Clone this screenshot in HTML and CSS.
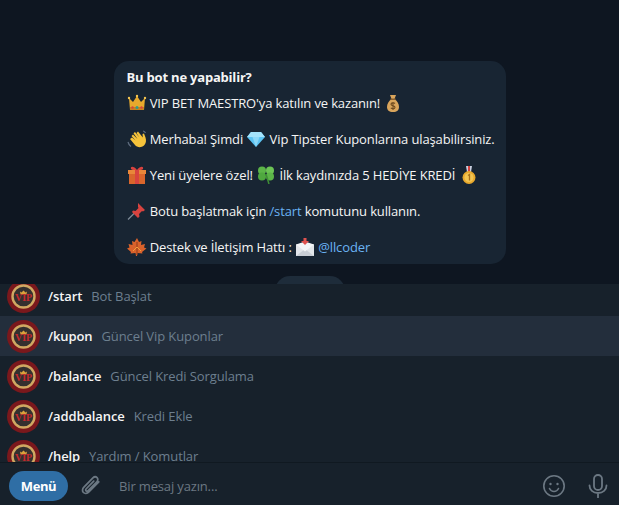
FILE: index.html
```html
<!DOCTYPE html>
<html lang="tr">
<head>
  <meta charset="UTF-8">
  <title>Bot</title>
  <link rel="stylesheet" href="styles.css">
</head>
<body>
  <svg class="defs" aria-hidden="true">
    <symbol id="crown" viewBox="0 0 20 18">
      <path d="M2 4l4 4 4-6 4 6 4-4-1 12H3z" fill="#e8a92c"/>
      <path d="M3 13h14v3H3z" fill="#c9811e"/>
      <circle cx="10" cy="13.500" r="1.500" fill="#2f9c8c"/>
      <circle cx="5.500" cy="13.500" r="1.200" fill="#d8433f"/>
      <circle cx="14.500" cy="13.500" r="1.200" fill="#d8433f"/>
      <circle cx="2" cy="4" r="1.200" fill="#f3c552"/>
      <circle cx="10" cy="2" r="1.200" fill="#f3c552"/>
      <circle cx="18" cy="4" r="1.200" fill="#f3c552"/>
    </symbol>
    <symbol id="bag" viewBox="0 0 20 18">
      <path d="M7 1h6l-1.500 4c3 2 4.500 5 4.500 8 0 3-2 5-6 5s-6-2-6-5c0-3 1.500-6 4.500-8z" fill="#d9a55c"/>
      <path d="M7.500 4.500h5v1.500h-5z" fill="#8a5f2c"/>
      <path d="M12 9.500c-1-1-4-1-4 .8s4 1 4 3-3.200 1.600-4.200.6M10 8v8" fill="none" stroke="#6e4a1f" stroke-width="1.100"/>
    </symbol>
    <symbol id="wave" viewBox="0 0 20 18">
      <path d="M3 9l5 6c2 2.500 6 3 9 .5 2-2 2.500-5 1.500-8L17 3.500l-1.500.5.300 3.500L11 1.500 9.500 3l3 4.500L8 2 6.500 3.300 10.500 9 6 4.500 4.500 6l4 4.500L5 7.500z" fill="#f5c33b"/>
      <path d="M1 12c.5 2 1.500 3.500 3 4.500M16 1c1 .2 2 1 2.500 2" fill="none" stroke="#5f6d80" stroke-width="1.200"/>
    </symbol>
    <symbol id="gem" viewBox="0 0 20 18">
      <path d="M5 2h10l4 5-9 10L1 7z" fill="#5cc3f2"/>
      <path d="M1 7h18L15 2H5z" fill="#a4e3fb"/>
      <path d="M6.500 7L10 17l3.500-10z" fill="#8bd8f8"/>
    </symbol>
    <symbol id="gift" viewBox="0 0 20 18">
      <path d="M2 6h16v12H2z" fill="#d9662c"/>
      <path d="M1 4h18v4H1z" fill="#e8873a"/>
      <path d="M8 4h4v14H8z" fill="#d8433f"/>
      <path d="M10 4C7 0 3 0 4 3c.3 1 3 1 6 1zm0 0c3-4 7-4 6-1-.3 1-3 1-6 1z" fill="#d8433f"/>
    </symbol>
    <symbol id="clover" viewBox="0 0 20 18">
      <circle cx="6" cy="4.500" r="4" fill="#5cb548"/>
      <circle cx="14" cy="4.500" r="4" fill="#6cc455"/>
      <circle cx="6" cy="10.500" r="4" fill="#4fa83f"/>
      <circle cx="14" cy="10.500" r="4" fill="#5cb548"/>
      <path d="M10 8l3 10" stroke="#3f8f35" stroke-width="1.500"/>
    </symbol>
    <symbol id="medal" viewBox="0 0 20 18">
      <path d="M7 0h6l-1 6H8z" fill="#c9cfe0"/>
      <path d="M9 0h2v6H9z" fill="#d8433f"/>
      <circle cx="10" cy="11.500" r="6.500" fill="#e8a92c"/>
      <circle cx="10" cy="11.500" r="4.500" fill="#f3c552"/>
      <path d="M9 9.500l1.500-1v6" fill="none" stroke="#a8701a" stroke-width="1.300"/>
    </symbol>
    <symbol id="pin" viewBox="0 0 20 18">
      <path d="M1 17.500l7-7" stroke="#7f8b98" stroke-width="1.300"/>
      <path d="M11 1l7 7-2 1.500-1-.5-3 3 .5 2.500-1.500 1.500-6-6L6 8.500l2.500.5 3-3-.5-1z" fill="#d8433f"/>
    </symbol>
    <symbol id="leaf" viewBox="0 0 20 18">
      <path d="M10 0l2 4 2.500-1-.5 4 4-1-1 3.500 2.500 1-4.500 3.500.5 1.500-5-.5-.5 3h-1l-.5-3-5 .5.500-1.500L0 10.500l2.500-1L1.500 6l4 1-.5-4L7.500 4z" fill="#d9622b"/>
      <path d="M10 4v13" stroke="#8f3a1a" stroke-width="1"/>
      <path d="M10 9l4 4M10 9l-4 4" stroke="#f0a03c" stroke-width="1"/>
    </symbol>
    <symbol id="mail" viewBox="0 0 20 18">
      <path d="M1 6.500L10 5l9 1.500V18H1z" fill="#e3e6ea"/>
      <path d="M1 18l9-7 9 7z" fill="#c9ced5"/>
      <path d="M1 6.500l9 7 9-7-9-3z" fill="#f4f5f7"/>
      <path d="M8.500 0h3v3H14l-4 4-4-4h2.500z" fill="#e0524f"/>
    </symbol>
    <symbol id="vip" viewBox="0 0 33 33">
      <circle cx="16.500" cy="16.500" r="16.500" fill="#7a181c"/>
      <circle cx="16.500" cy="16.500" r="11" fill="#34302f" stroke="#d0a862" stroke-width="2.400"/>
      <path d="M13 11.500l1.500 1 2-2 2 2 1.500-1-.5 3h-6z" fill="#d9a13c"/>
      <text x="16.500" y="21" class="vip-text">VIP</text>
    </symbol>
  </svg>

  <main class="chat">
    <section class="card">
      <p class="card-title">Bu bot ne yapabilir?</p>
      <p><svg class="emo"><use href="#crown"/></svg> VIP BET MAESTRO'ya katılın ve kazanın! <svg class="emo"><use href="#bag"/></svg></p>
      <p><svg class="emo"><use href="#wave"/></svg> Merhaba! Şimdi <svg class="emo"><use href="#gem"/></svg> Vip Tipster Kuponlarına ulaşabilirsiniz.</p>
      <p><svg class="emo"><use href="#gift"/></svg> Yeni üyelere özel! <svg class="emo"><use href="#clover"/></svg> İlk kaydınızda 5 HEDİYE KREDİ <svg class="emo"><use href="#medal"/></svg></p>
      <p><svg class="emo"><use href="#pin"/></svg> Botu başlatmak için <a>/start</a> komutunu kullanın.</p>
      <p><svg class="emo"><use href="#leaf"/></svg> Destek ve İletişim Hattı : <svg class="emo"><use href="#mail"/></svg> <a>@llcoder</a></p>
    </section>
    <div class="start-pill"></div>
  </main>

  <ul class="commands">
    <li class="cmd"><svg class="avatar"><use href="#vip"/></svg><b>/start</b><span>Bot Başlat</span></li>
    <li class="cmd active"><svg class="avatar"><use href="#vip"/></svg><b>/kupon</b><span>Güncel Vip Kuponlar</span></li>
    <li class="cmd"><svg class="avatar"><use href="#vip"/></svg><b>/balance</b><span>Güncel Kredi Sorgulama</span></li>
    <li class="cmd"><svg class="avatar"><use href="#vip"/></svg><b>/addbalance</b><span>Kredi Ekle</span></li>
    <li class="cmd"><svg class="avatar"><use href="#vip"/></svg><b>/help</b><span>Yardım / Komutlar</span></li>
  </ul>

  <footer class="composer">
    <button class="menu-btn">Menü</button>
    <svg class="clip" viewBox="0 0 24 24" fill="none" stroke="#6c7883" stroke-width="1.900" stroke-linecap="round">
      <path d="M20.500 7.500l-10.800 11c-1.900 1.900-4.600 2-6 .6s-1.300-4 .6-5.900l9.800-10c1.300-1.300 3.300-1.500 4.500-.3s1.100 3.200-.2 4.500l-9.500 9.700c-.7.700-1.700.8-2.300.2s-.5-1.600.2-2.300l8.200-8.300"/>
    </svg>
    <span class="placeholder">Bir mesaj yazın...</span>
    <svg class="smile" viewBox="0 0 24 24" fill="none" stroke="#6c7883" stroke-width="1.600" stroke-linecap="round">
      <circle cx="12" cy="12" r="10.200"/>
      <circle cx="8.500" cy="10" r="1.200" fill="#6c7883" stroke="none"/>
      <circle cx="15.500" cy="10" r="1.200" fill="#6c7883" stroke="none"/>
      <path d="M7.500 14.500c1 2 2.700 3 4.500 3s3.500-1 4.500-3"/>
    </svg>
    <svg class="mic" viewBox="0 0 20 24" fill="none" stroke="#6c7883" stroke-width="1.800" stroke-linecap="round">
      <rect x="6" y="1" width="8" height="15" rx="4"/>
      <path d="M1.500 11.500c0 4.500 3.500 7.500 8.500 7.500s8.500-3 8.500-7.500M10 19v4.500"/>
    </svg>
  </footer>
</body>
</html>
```

FILE: styles.css
```css
* { box-sizing: border-box; }
html, body { height: 100%; }
body {
  margin: 0;
  display: flex;
  flex-direction: column;
  overflow: hidden;
  background: #0e1621;
  color: #f5f5f5;
  font-family: "Open Sans", sans-serif;
  font-size: 13px;
  line-height: 18px;
}
.defs { display: none; }

/* chat and composer sit above the command list, so its rows slide under them */
.chat {
  position: relative;
  z-index: 1;
  height: 284px;
  flex: none;
  overflow: hidden;
  display: flex;
  flex-direction: column;
  align-items: center;
  padding-top: 61px;
  background: #0e1621;
}
.card {
  width: 392px;
  height: 203px;
  flex: none;
  padding: 7px 13px;
  border-radius: 15px;
  background: #182533;
  letter-spacing: -0.13px;
}
.card p { margin: 0 0 18px; white-space: nowrap; }
.card .card-title { margin-bottom: 8px; font-weight: 700; letter-spacing: -0.2px; }
.card a { color: #6ab3f3; }
.emo {
  width: 20px;
  height: 18px;
  margin-top: -2px;
  vertical-align: -4px;
}
.start-pill {
  width: 70px;
  height: 30px;
  flex: none;
  margin-top: 12px;
  border-radius: 15px;
  background: #1e2c3a;
}

.commands {
  height: 178px;
  flex: none;
  margin: 0;
  padding: 0;
  list-style: none;
  background: #17212b;
  line-height: 12px;
  letter-spacing: -0.1px;
}
.cmd {
  height: 40px;
  display: flex;
  align-items: center;
  padding-left: 7px;
}
.cmd:first-child { margin-top: -8px; }
.cmd.active { background: #232e3c; }
.avatar { width: 33px; height: 33px; flex: none; margin-right: 8px; }
.vip-text {
  fill: #c4282e;
  font-family: "Liberation Serif", serif;
  font-size: 10px;
  font-weight: 700;
  text-anchor: middle;
}
.cmd b { font-weight: 600; color: #f5f5f5; }
.cmd span { margin-left: 9px; color: #6d7f8f; }

.composer {
  position: relative;
  z-index: 1;
  flex: 1;
  display: flex;
  align-items: center;
  padding: 8px 11px 4px 9px;
  border-top: 1px solid #101921;
  background: #17212b;
}
.menu-btn {
  width: 59px;
  height: 30px;
  flex: none;
  padding: 0;
  border: 0;
  border-radius: 15px;
  background: #2f6ea5;
  color: #fff;
  font: 700 13px "Open Sans", sans-serif;
  letter-spacing: -0.4px;
}
.clip { width: 22px; height: 24px; flex: none; margin-left: 12px; }
.placeholder { flex: 1; margin-left: 17px; color: #6c7883; letter-spacing: -0.15px; }
.smile { width: 24px; height: 24px; flex: none; }
.mic { width: 20px; height: 24px; flex: none; margin-left: 22px; }
```
